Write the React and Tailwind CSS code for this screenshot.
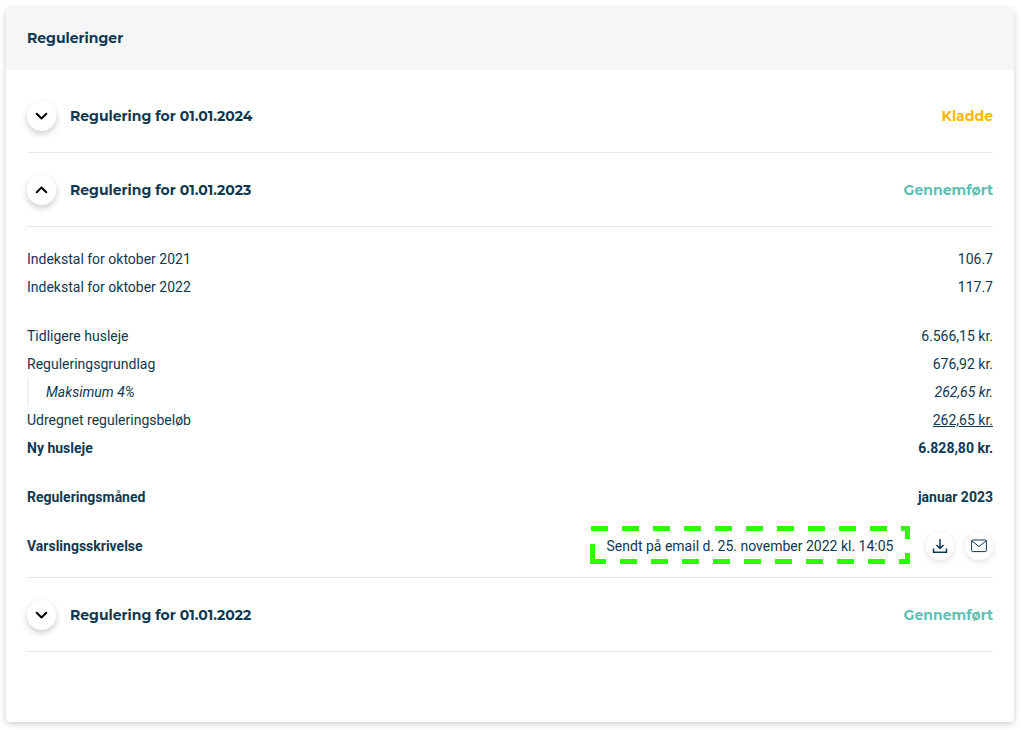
import { useState } from 'react'

const HISTORY = [
  { date: '01.01.2024', status: 'Kladde' },
  { date: '01.01.2023', status: 'Gennemført' },
  { date: '01.01.2022', status: 'Gennemført' },
]

const STATUS_COLORS = {
  Kladde: 'text-[#ffb700]',
  Gennemført: 'text-[#5ebfb5]',
}

function Chevron({ up }) {
  return (
    <svg
      viewBox="0 0 13 8"
      className={up ? 'h-2 w-[13px] rotate-180' : 'h-2 w-[13px]'}
      fill="none"
      stroke="#000"
      strokeWidth="2"
      strokeLinecap="round"
      strokeLinejoin="round"
      aria-hidden="true"
    >
      <path d="M1.7 1.8 6.5 6.5l4.8-4.7" />
    </svg>
  )
}

function DownloadIcon() {
  return (
    <svg viewBox="0 0 16 16" className="h-4 w-4" fill="none" stroke="currentColor" strokeWidth="1.5" aria-hidden="true">
      <path d="M8 1v9.5M4.5 7 8 10.5 11.5 7M1.5 10.5v3.75h13V10.5" />
    </svg>
  )
}

function MailIcon() {
  return (
    <svg viewBox="0 0 16 16" className="h-4 w-4" fill="none" stroke="currentColor" strokeLinejoin="round" aria-hidden="true">
      <rect x="0.6" y="2" width="14.8" height="11.6" rx="1" />
      <path d="m1 3 7 5.5L15 3" />
    </svg>
  )
}

function Highlight({ children }) {
  return (
    <span className="relative flex h-10 w-80 items-center justify-center">
      {children}
      <svg
        viewBox="0 0 320 38"
        className="pointer-events-none absolute inset-x-0 top-0 h-[38px] w-full"
        fill="none"
        stroke="#2bff00"
        strokeWidth="5"
        aria-hidden="true"
      >
        <path d="M1 2.5h316.5v33H0" strokeDasharray="17 14" />
        <path d="M2.5 18v20" />
      </svg>
    </span>
  )
}

function RoundButton({ label, children }) {
  return (
    <button
      aria-label={label}
      className="flex h-7 w-7 items-center justify-center rounded-full bg-white shadow-[0_2px_6px_rgba(0,0,0,0.12)]"
    >
      {children}
    </button>
  )
}

function Row({ label, children, className = '' }) {
  return (
    <div className={`flex h-7 items-center justify-between ${className}`}>
      <dt>{label}</dt>
      <dd>{children}</dd>
    </div>
  )
}

function Details() {
  return (
    <dl className="flex flex-col gap-[21px] border-b border-[#e8e8e8] pt-[18px] pb-[17px] text-sm">
      <div>
        <Row label="Indekstal for oktober 2021">106.7</Row>
        <Row label="Indekstal for oktober 2022">117.7</Row>
      </div>
      <div>
        <Row label="Tidligere husleje">6.566,15 kr.</Row>
        <Row label="Reguleringsgrundlag">676,92 kr.</Row>
        <Row label="Maksimum 4%" className="border-l-2 border-[#f0f0f0] pl-[17px] italic">
          262,65 kr.
        </Row>
        <Row label="Udregnet reguleringsbeløb">
          <span className="underline">262,65 kr.</span>
        </Row>
        <Row label="Ny husleje" className="font-bold">
          6.828,80 kr.
        </Row>
      </div>
      <Row label="Reguleringsmåned" className="font-bold">
        januar 2023
      </Row>
      <div className="flex h-7 items-center justify-between">
        <dt className="font-bold">Varslingsskrivelse</dt>
        <dd className="flex items-center gap-4">
          <Highlight>Sendt på email d. 25. november 2022 kl. 14:05</Highlight>
          <span className="flex gap-[11px]">
            <RoundButton label="Download">
              <DownloadIcon />
            </RoundButton>
            <RoundButton label="Send email">
              <MailIcon />
            </RoundButton>
          </span>
        </dd>
      </div>
    </dl>
  )
}

export default function App() {
  const [open, setOpen] = useState('01.01.2023')

  return (
    <main className="bg-white py-2 pr-[7px] pl-1.5 font-[Roboto,sans-serif] text-[#103850]">
      <section className="overflow-hidden rounded bg-white shadow-[0_2px_6px_rgba(0,0,0,0.2)]">
        <header className="flex h-[62px] items-center bg-[#f4f6f8] px-[21px] pb-0.5">
          <h1 className="font-[Montserrat,Inter,sans-serif] text-sm font-bold">Reguleringer</h1>
        </header>
        <div className="px-[21px] pt-[9px] pb-[70px]">
          {HISTORY.map((item) => {
            const isOpen = open === item.date
            return (
              <article key={item.date}>
                <div className="flex h-[74px] items-center border-b border-[#e8e8e8] font-[Montserrat,Inter,sans-serif] text-sm font-bold">
                  <button
                    onClick={() => setOpen(isOpen ? null : item.date)}
                    aria-expanded={isOpen}
                    aria-label={`Regulering for ${item.date}`}
                    className="flex h-[30px] w-[29px] items-center justify-center rounded-full bg-white shadow-[0_3px_6px_rgba(0,0,0,0.2)]"
                  >
                    <Chevron up={isOpen} />
                  </button>
                  <h2 className="ml-3.5">Regulering for {item.date}</h2>
                  <span className={`ml-auto ${STATUS_COLORS[item.status]}`}>{item.status}</span>
                </div>
                {isOpen && <Details />}
              </article>
            )
          })}
        </div>
      </section>
    </main>
  )
}
